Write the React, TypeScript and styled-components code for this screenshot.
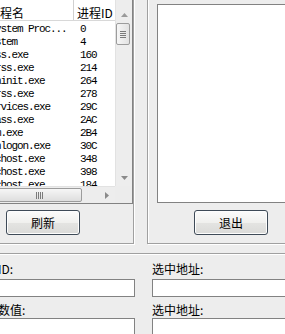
import React from "react";
import styled, { createGlobalStyle } from "styled-components";

const GlobalStyle = createGlobalStyle`
  html, body {
    margin: 0;
    padding: 0;
    background: #ededed;
    overflow: hidden;
  }
  body {
    font-family: "Noto Sans CJK SC", "Liberation Sans", sans-serif;
    font-size: 12px;
    color: #000;
  }
`;

// the screenshot is a crop of a bigger dialog, so the window starts off-screen
const Window = styled.div`
  width: 360px;
  margin: -10px 0 0 -34px;
`;

const TopRow = styled.div`
  display: flex;
  gap: 13px;
`;

const GroupBox = styled.div<{ $w: number; $pt: number; $pl: number }>`
  box-sizing: border-box;
  width: ${(p) => p.$w}px;
  height: 254px;
  padding: ${(p) => p.$pt}px 0 0 ${(p) => p.$pl}px;
  border: 1px solid #a0a0a0;
  box-shadow: inset 1px 1px 0 #fff, 1px 1px 0 #fff;
  display: flex;
  flex-direction: column;
`;

const ListView = styled.div<{ $h: number }>`
  box-sizing: border-box;
  width: 154px;
  height: ${(p) => p.$h}px;
  border: 1px solid #828282;
  background: #fff;
  display: grid;
  grid-template-columns: 135px 17px;
  grid-template-rows: 188px 17px;
`;

const EmptyList = styled.div<{ $h: number }>`
  box-sizing: border-box;
  width: 170px;
  height: ${(p) => p.$h}px;
  border: 1px solid #828282;
  background: #fff;
`;

const Content = styled.div`
  overflow: hidden;
`;

const Header = styled.div`
  display: flex;
  height: 22px;
  border-bottom: 1px solid #d8d8d8;
  font-size: 12px;
  line-height: 14px;
`;

const HeadCell = styled.div<{ $w?: number; $pl: number; $divider?: boolean }>`
  box-sizing: border-box;
  width: ${(p) => (p.$w ? `${p.$w}px` : "auto")};
  flex: ${(p) => (p.$w ? "none" : 1)};
  padding-left: ${(p) => p.$pl}px;
  display: flex;
  align-items: flex-end;
  white-space: nowrap;
  overflow: hidden;
  border-right: ${(p) => (p.$divider ? "1px solid #d0d0d0" : "none")};
`;

const Rows = styled.div`
  padding-top: 2px;
`;

const Row = styled.div`
  display: flex;
  height: 13px;
  font-family: "Liberation Mono", monospace;
  font-size: 11px;
  line-height: 13px;
  letter-spacing: -1.1px;
  white-space: nowrap;
`;

const Cell = styled.div<{ $w?: number; $pl: number }>`
  box-sizing: border-box;
  width: ${(p) => (p.$w ? `${p.$w}px` : "auto")};
  flex: ${(p) => (p.$w ? "none" : 1)};
  padding-left: ${(p) => p.$pl}px;
  overflow: hidden;
`;

const VScroll = styled.div`
  display: flex;
  flex-direction: column;
  background: #ededed;
  border-left: 1px solid #e2e2e2;
`;

const ArrowBox = styled.div<{ $h: number; $w?: number; $align: string; $pad?: string }>`
  flex: none;
  height: ${(p) => p.$h}px;
  width: ${(p) => (p.$w ? `${p.$w}px` : "auto")};
  display: flex;
  justify-content: center;
  align-items: ${(p) => p.$align};
  padding: ${(p) => p.$pad || "0"};
  box-sizing: border-box;
`;

const Track = styled.div`
  flex: 1;
`;

const VThumb = styled.div`
  box-sizing: border-box;
  height: 22px;
  margin: 0 2px 0 0;
  border: 1px solid #9c9c9c;
  border-radius: 2px;
  background: linear-gradient(to right, #f6f6f6, #e2e2e2);
  display: flex;
  align-items: center;
  justify-content: center;
`;

const HScroll = styled.div`
  display: flex;
  background: #ededed;
  border-top: 1px solid #e2e2e2;
`;

const HThumb = styled.div`
  box-sizing: border-box;
  width: 85px;
  margin: 1px 0 1px 0;
  border: 1px solid #9c9c9c;
  border-radius: 2px;
  background: linear-gradient(#f6f6f6, #dedede);
  display: flex;
  align-items: center;
  justify-content: center;
`;

const Corner = styled.div`
  background: #ececec;
`;

const ButtonRow = styled.div<{ $mt: number; $ml: number }>`
  margin: ${(p) => p.$mt}px 0 0 ${(p) => p.$ml}px;
`;

const Button = styled.button`
  box-sizing: border-box;
  width: 74px;
  height: 25px;
  padding: 0;
  border: 1px solid #3e4a57;
  border-radius: 3px;
  background: linear-gradient(#fbfbfb, #f0f0ee 50%, #e4e4e2 51%, #dadad8);
  box-shadow: inset 0 0 0 1px #fdfdfd;
  font-family: "Noto Sans CJK SC", sans-serif;
  font-size: 12px;
  color: #000;
`;

const Separator = styled.div`
  margin-top: 9px;
  height: 1px;
  background: #a0a0a0;
  border-bottom: 1px solid #fff;
`;

const Fields = styled.div`
  display: grid;
  grid-template-columns: 161px 161px;
  column-gap: 17px;
  padding: 7px 0 0 8px;
`;

const Field = styled.div<{ $mt: number }>`
  margin-top: ${(p) => p.$mt}px;
  display: flex;
  flex-direction: column;
`;

const Label = styled.div`
  height: 14px;
  line-height: 14px;
  font-size: 12px;
  white-space: nowrap;
`;

const Input = styled.input<{ $mt: number }>`
  box-sizing: border-box;
  height: 18px;
  margin-top: ${(p) => p.$mt}px;
  border: 1px solid #828282;
  background: #fff;
  padding: 0 2px;
  font-size: 12px;
  outline: none;
`;

const Tri = ({ dir, color = "#8a8a8a" }: { dir: "up" | "down" | "right"; color?: string }) => {
  const pts = dir === "up" ? "0,4 3.5,0 7,4" : dir === "down" ? "0,0 7,0 3.5,4" : "0,0 4,3.5 0,7";
  const w = dir === "right" ? 4 : 7;
  const h = dir === "right" ? 7 : 4;
  return (
    <svg width={w} height={h} viewBox={`0 0 ${w} ${h}`}>
      <polygon points={pts} fill={color} />
    </svg>
  );
};

const Grip = ({ vertical }: { vertical?: boolean }) =>
  vertical ? (
    <svg width="7" height="7" viewBox="0 0 7 7">
      {[0, 2, 4, 6].map((x) => (
        <rect key={x} x={x} y="0" width="1" height="7" fill="#7b7b7b" />
      ))}
    </svg>
  ) : (
    <svg width="6" height="7" viewBox="0 0 6 7">
      {[0, 2, 4, 6].map((y) => (
        <rect key={y} x="0" y={y} width="6" height="1" fill="#7b7b7b" />
      ))}
    </svg>
  );

const processes = [
  ["[System Proc...", "0"],
  ["System", "4"],
  ["smss.exe", "160"],
  ["csrss.exe", "214"],
  ["wininit.exe", "264"],
  ["csrss.exe", "278"],
  ["services.exe", "29C"],
  ["lsass.exe", "2AC"],
  ["lsm.exe", "2B4"],
  ["winlogon.exe", "30C"],
  ["svchost.exe", "348"],
  ["svchost.exe", "398"],
  ["svchost.exe", "184"],
];

export default function App() {
  return (
    <Window>
      <GlobalStyle />
      <TopRow>
        <GroupBox $w={174} $pt={6} $pl={12}>
          <ListView $h={207}>
            <Content>
              <Header>
                <HeadCell $w={94} $pl={8} $divider>进程名</HeadCell>
                <HeadCell $pl={3}>进程ID</HeadCell>
              </Header>
              <Rows>
                {processes.map(([name, pid], i) => (
                  <Row key={i}>
                    <Cell $w={94} $pl={4}>{name}</Cell>
                    <Cell $pl={6}>{pid}</Cell>
                  </Row>
                ))}
              </Rows>
            </Content>
            <VScroll>
              <ArrowBox $h={25} $align="flex-end" $pad="0 0 6px 0">
                <Tri dir="up" color="#9a9a9a" />
              </ArrowBox>
              <Track>
                <VThumb>
                  <Grip />
                </VThumb>
              </Track>
              <ArrowBox $h={16} $align="center">
                <Tri dir="down" />
              </ArrowBox>
            </VScroll>
            <HScroll>
              <ArrowBox $h={16} $w={17} $align="center" />
              <HThumb>
                <Grip vertical />
              </HThumb>
              <Track />
              <ArrowBox $h={16} $w={17} $align="center">
                <Tri dir="right" />
              </ArrowBox>
            </HScroll>
            <Corner />
          </ListView>
          <ButtonRow $mt={6} $ml={27}>
            <Button>刷新</Button>
          </ButtonRow>
        </GroupBox>
        <GroupBox $w={190} $pt={13} $pl={9}>
          <EmptyList $h={199} />
          <ButtonRow $mt={7} $ml={37}>
            <Button>退出</Button>
          </ButtonRow>
        </GroupBox>
      </TopRow>
      <Separator />
      <Fields>
        <Field $mt={0}>
          <Label>进程ID:</Label>
          <Input $mt={3} />
        </Field>
        <Field $mt={0}>
          <Label>选中地址:</Label>
          <Input $mt={3} />
        </Field>
        <Field $mt={6}>
          <Label>修改数值:</Label>
          <Input $mt={1} />
        </Field>
        <Field $mt={6}>
          <Label>选中地址:</Label>
          <Input $mt={1} />
        </Field>
      </Fields>
    </Window>
  );
}
